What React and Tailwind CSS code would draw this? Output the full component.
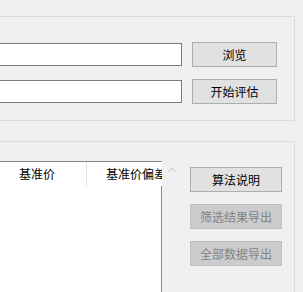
import React from 'react';

const font = { fontFamily: '"Noto Sans CJK SC", "Noto Sans", sans-serif' };

const Btn = ({ children, disabled, wide }) => (
  <div
    className={`flex items-center justify-center h-[25px] border text-[12px] leading-none ${wide ? 'w-[92px]' : 'w-[85px]'} ${
      disabled ? 'bg-[#cccccc] border-[#bfbfbf] text-[#838383]' : 'bg-[#e1e1e1] border-[#adadad] text-black'
    }`}
  >
    {children}
  </div>
);

const InputRow = ({ label }) => (
  <div className="flex items-center gap-[10px]">
    <div className="w-[182px] h-[23px] bg-white border border-l-0 border-[#7a7a7a]"></div>
    <Btn>{label}</Btn>
  </div>
);

export default function App() {
  return (
    <div className="w-[303px] h-[292px] bg-[#f0f0f0] overflow-hidden pt-[16px]" style={font}>
      {/* 文件选择 */}
      <div className="w-[295px] h-[105px] border border-l-0 border-[#dcdcdc] pt-[25px] flex flex-col gap-[12px]">
        <InputRow label="浏览" />
        <InputRow label="开始评估" />
      </div>

      {/* 结果列表 */}
      <div className="w-[295px] h-[200px] mt-[20px] border-t border-r border-[#dcdcdc] pt-[19px] flex gap-[28px]">
        <div className="relative w-[162px] flex flex-col">
          <div className="h-[25px] bg-white border-t border-[#828790] flex items-center text-[12px] text-black">
            <div className="w-[87px] h-full flex items-center pl-[19px] border-r border-[#e5e5e5]">基准价</div>
            <div className="flex-1 h-full flex items-center pl-[19px] overflow-hidden whitespace-nowrap">基准价偏差</div>
          </div>
          <div className="flex-1 bg-white border-r border-[#828790]"></div>
          <svg className="absolute left-[168px] top-[6px]" width="8" height="5" viewBox="0 0 8 5">
            <path d="M0.5 4.5 L4 1 L7.5 4.5" fill="none" stroke="#c4c4c4" strokeWidth="1" />
          </svg>
        </div>
        <div className="flex flex-col gap-[12px] pt-[6px]">
          <Btn wide>算法说明</Btn>
          <Btn wide disabled>筛选结果导出</Btn>
          <Btn wide disabled>全部数据导出</Btn>
        </div>
      </div>
    </div>
  );
}
